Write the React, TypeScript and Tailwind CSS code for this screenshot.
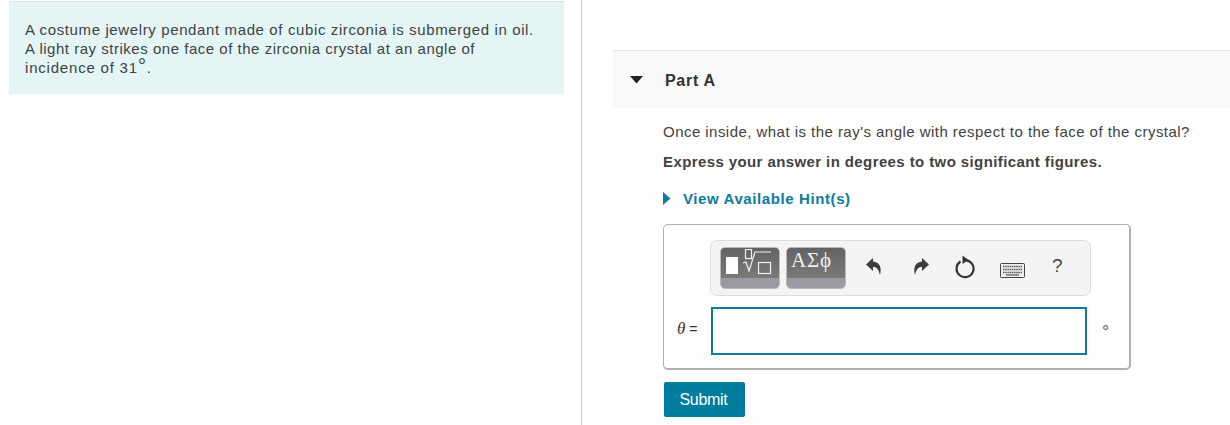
export default function App() {
  return (
    <div className="flex h-[425px] w-[1230px] overflow-hidden bg-white font-['Liberation_Sans',Arial,sans-serif] text-[#424242]">
      <div className="h-[425px] w-[582px] shrink-0 border-r border-[#c7cfdc] pl-[9px] pt-px">
        <div className="h-[93px] w-[555px] border-t border-[#dfe3e6] bg-[#e4f5f6] pl-4 pt-[18px] text-[15px] leading-[19px]">
          <p className="tracking-[0.62px]">A costume jewelry pendant made of cubic zirconia is submerged in oil.</p>
          <p className="tracking-[0.52px]">A light ray strikes one face of the zirconia crystal at an angle of</p>
          <p className="tracking-[0.8px]">incidence of 31<span className="text-[20px] leading-[0]">°</span>.</p>
        </div>
      </div>
      <div className="min-w-0 flex-1 pl-[31px] pt-[50px]">
        <div className="flex h-[58px] items-center border-t border-[#e0e3e8] bg-[#f9f9f9] pl-[17px]">
          <svg width="14" height="8" viewBox="0 0 14 8"><path d="M0 0h13L6.500 7.500z" fill="#222" /></svg>
          <h2 className="ml-[21px] mt-[2px] text-[16px] font-bold tracking-[0.7px] text-[#333]">Part A</h2>
        </div>
        <div className="pl-[50px]">
          <p className="mt-[14px] text-[15px] leading-[19px] tracking-[0.46px]">Once inside, what is the ray's angle with respect to the face of the crystal?</p>
          <p className="mt-[11px] text-[15px] font-bold leading-[19px] tracking-[0.4px]">Express your answer in degrees to two significant figures.</p>
          <button className="mt-[18px] flex items-center text-[15px] font-bold leading-[19px] tracking-[0.6px] text-[#0b7c9f]">
            <svg width="8" height="13" viewBox="0 0 8 13"><path d="M0 0l7.500 6.500L0 13z" fill="#0b7c9f" /></svg>
            <span className="ml-[12px]">View Available Hint(s)</span>
          </button>
          <div className="mt-[16px] h-[146px] w-[468px] rounded-[5px] border-2 border-t border-l border-[#b0b0b0] pt-[15px]">
            <div className="ml-[46px] flex h-[56px] w-[381px] items-center rounded-[7px] border border-[#dcdcdc] bg-[#f4f4f4] pl-[9px]">
              <div className="flex h-[42px] w-[60px] flex-col overflow-hidden rounded-[5px] border border-[#bbb] bg-[#9a9aa2]">
                <div className="flex h-[30px] items-start bg-gradient-to-b from-[#636363] to-[#7a7a7a] pl-[5px] pt-px">
                  <span className="mt-[8px] h-[17px] w-[12px] bg-white" />
                  <svg className="ml-[5px]" width="30" height="26" viewBox="0 0 30 26" fill="none" stroke="#f0f0f0" strokeWidth="1.200">
                    <rect x="2.500" y="0.500" width="6" height="9" />
                    <path d="M0 14l3-1 3 9 6-19h16" />
                    <rect x="15.500" y="13.500" width="12" height="11" />
                  </svg>
                </div>
              </div>
              <div className="ml-[6px] flex h-[42px] w-[60px] flex-col overflow-hidden rounded-[5px] border border-[#bbb] bg-[#9a9aa2]">
                <div className="h-[30px] bg-gradient-to-b from-[#636363] to-[#7a7a7a] pl-[4px] font-['Liberation_Serif',serif] text-[21px] leading-[24px] tracking-[0.8px] text-[#f0f0f0]">ΑΣϕ</div>
              </div>
              <svg className="mb-[2px] ml-[19px]" width="18" height="20" viewBox="0 0 18 20"><path d="M8 1L1 7.500 8 14V10c3-.5 5.500 1.500 7 8 2-8-.5-13-7-13.500z" fill="#3d3d3d" /></svg>
              <svg className="mb-[2px] ml-[29px]" width="18" height="20" viewBox="0 0 18 20"><path d="M10 1l7 6.500L10 14V10c-3-.5-5.500 1.500-7 8-2-8 .5-13 7-13.500z" fill="#3d3d3d" /></svg>
              <svg className="mb-[2px] ml-[24px]" width="22" height="24" viewBox="0 0 22 24" fill="none"><path d="M6.500 6.500a8.500 8.500 0 1 0 6-1.200" stroke="#333" strokeWidth="2.200" /><path d="M8.500 0.500l6 4.500-6 4z" fill="#333" /></svg>
              <svg className="ml-[24px] mt-[4px]" width="25" height="15" viewBox="0 0 25 15">
                <rect x="0.500" y="0.500" width="24" height="14" rx="1" fill="#eee" stroke="#444" />
                <path d="M3 3.500h19M3 6.500h19M3 9.500h19" stroke="#555" strokeWidth="1.500" strokeDasharray="1.500 0.700" />
                <path d="M6 12h13" stroke="#555" strokeWidth="1.200" />
              </svg>
              <span className="mb-[3px] ml-[27px] text-[19px] text-[#444]">?</span>
            </div>
            <div className="mt-[11px] flex items-center">
              <span className="mb-[4px] ml-[13px] flex w-[34px] items-baseline gap-[4px] text-[14px] text-[#333]"><i className="font-['Liberation_Serif',serif] text-[17px]">θ</i><span>=</span></span>
              <input className="h-[48px] w-[376px] border-2 border-[#0b7c9f] bg-white outline-none" aria-label="answer" />
              <span className="ml-[15px] mt-[3px] text-[18px] text-[#666]">°</span>
            </div>
          </div>
          <button className="ml-px mt-[12px] h-[35px] w-[81px] rounded-[2px] bg-[#007c9f] pr-[2px] text-[16px] tracking-[-0.3px] text-white">Submit</button>
        </div>
      </div>
    </div>
  );
}
